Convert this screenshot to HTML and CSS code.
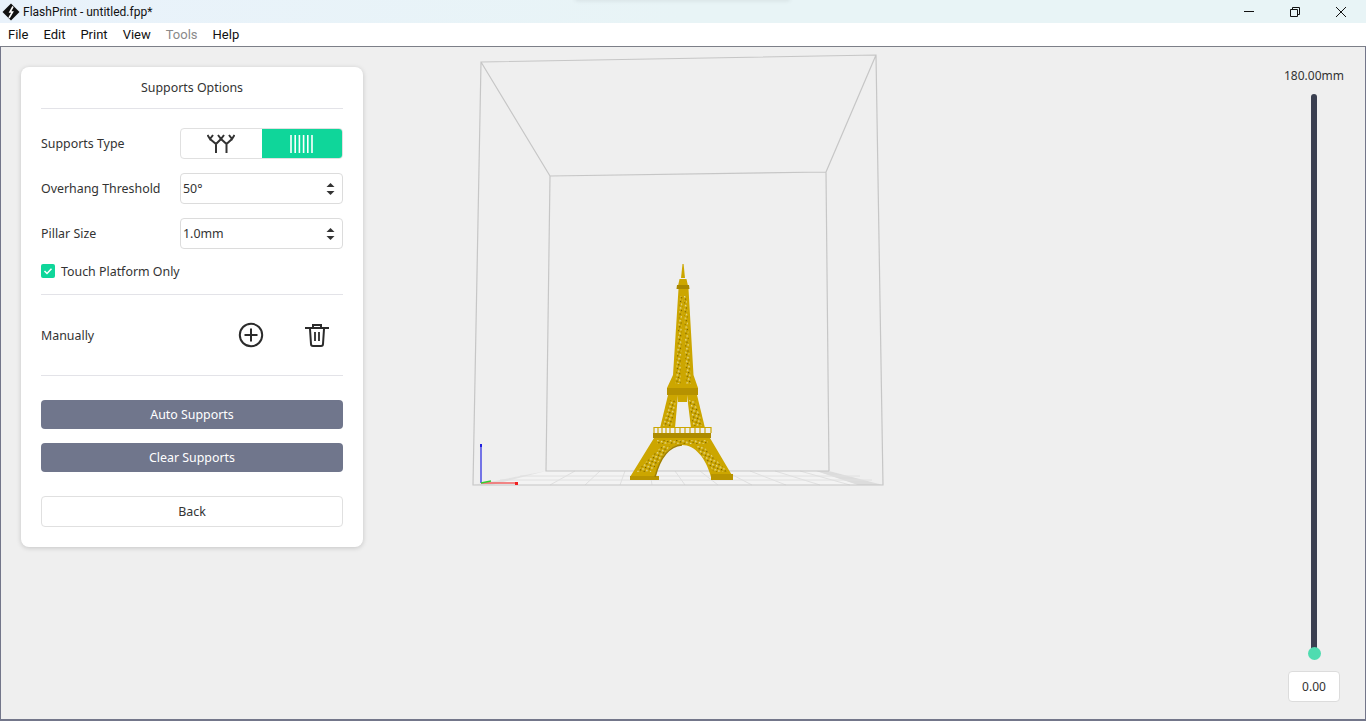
FILE: index.html
```html
<!DOCTYPE html>
<html lang="en">
<head>
  <meta charset="UTF-8" />
  <title>FlashPrint - untitled.fpp*</title>
  <link rel="stylesheet" href="styles.css">
</head>
<body>
  <div class="titlebar">
    <div class="title-shadow"></div>
    <svg class="logo" width="18" height="18" viewBox="0 0 18 18">
      <path d="M9 0.5 L17.5 9 L9 17.5 L0.5 9 Z" fill="#111"/>
      <path d="M11 3.5 L8 9 L10.5 9 L7 15" fill="none" stroke="#fff" stroke-width="1.6"/>
    </svg>
    <span class="title">FlashPrint - untitled.fpp*</span>
    <div class="winbtns">
      <svg width="12" height="12" viewBox="0 0 12 12"><path d="M1 5.5 H11" stroke="#111" fill="none"/></svg>
      <svg width="12" height="12" viewBox="0 0 12 12"><path d="M1.5 3.5 H8.5 V10.5 H1.5 Z M3.5 3.5 V1.5 H10.5 V8.5 H8.5" stroke="#111" fill="none"/></svg>
      <svg width="12" height="12" viewBox="0 0 12 12"><path d="M1 1 L11 11 M11 1 L1 11" stroke="#111" fill="none"/></svg>
    </div>
  </div>

  <div class="menubar">
    <span>File</span>
    <span>Edit</span>
    <span>Print</span>
    <span>View</span>
    <span class="disabled">Tools</span>
    <span>Help</span>
  </div>

  <div class="workspace">
    <svg class="scene" viewBox="1 47 1364 672" width="1364" height="672">
      <defs>
        <pattern id="lattice" width="4" height="4" patternUnits="userSpaceOnUse" patternTransform="rotate(20)">
          <rect x="0" y="0" width="1.5" height="1.5" fill="#e6dc9c"/>
          <rect x="2" y="2" width="1.2" height="1.2" fill="#6f5a00"/>
        </pattern>
      </defs>
      <!-- floor grid -->
      <path d="M546 471 H829 L883 485 H473 Z" fill="#f3f3f3"/>
      <path d="M829 471 L883 485 H858 L816 471 Z" fill="#dcdcdc"/>
      <path d="M546 471 L473 485 H492 Z" fill="#e2e2e2"/>
      <path d="M520 476 H860 M500 480 H872 M575 471 L550 485 M600 471 L585 485 M625 471 L620 485 M650 471 L652 485 M675 471 L685 485 M700 471 L718 485 M725 471 L752 485 M750 471 L786 485 M775 471 L820 485 M800 471 L850 485" stroke="#e0e0e0" stroke-width="1" fill="none"/>
      <!-- build volume -->
      <path d="M481 62 L876 55 L883 485 H473 Z M550 176 L826 172 L829 471 M550 176 L546 471 H829 M481 62 L550 176 M876 55 L826 172" fill="none" stroke="#c6c6c6" stroke-width="1.2"/>
      <!-- axes -->
      <path d="M481 445 V483" stroke="#2020e0" stroke-width="1.2"/>
      <path d="M481 483 H517" stroke="#f06060" stroke-width="1.6"/>
      <path d="M481 483 L491 481" stroke="#30d030" stroke-width="1.4"/>
      <rect x="480" y="444" width="2" height="3" fill="#2020e0"/>
      <rect x="515" y="482" width="3" height="3" fill="#f02020"/>

      <!-- tower -->
      <g fill="#cca600">
        <path d="M682.5 264 H683.6 L685 278 H681 Z"/>
        <path d="M679.5 279 H686.5 L688 286 H678 Z"/>
        <path d="M677 285 H689 L689.5 289 H676.5 Z" fill="#a98800"/>
        <path d="M678.5 289 H688.5 L693.5 375 L698 388 H667 L673 375 Z"/>
        <path d="M667 388 H698 V395 H667 Z" fill="#b69200"/>
        <path d="M668 395 H678 L675 428 H660 Z"/>
        <path d="M687 395 H697 L705 428 H691 Z"/>
        <path d="M678 395 H687 V402 H678 Z"/>
        <path d="M653 433 H711 V438 H653 Z" fill="#ad8b00"/>
        <path d="M654 438 H710 L733 477 H711 C706 458 695 445 682 445 C668 445 660 458 655 477 H630 Z"/>
        <rect x="630" y="476" width="29" height="4" fill="#b89400"/>
        <rect x="711" y="474" width="22" height="6" fill="#b89400"/>
      </g>
      <!-- railing -->
      <path d="M654 427.5 H711 M654 427 V433 M658 428 V433 M662 428 V433 M666 428 V433 M670 428 V433 M675 428 V433 M680 428 V433 M685 428 V433 M690 428 V433 M695 428 V433 M700 428 V433 M705 428 V433 M711 427 V433" stroke="#cca600" stroke-width="1.2" fill="none"/>
      <!-- lattice -->
      <g fill="url(#lattice)">
        <path d="M680 296 H682.5 L680.5 384 H675.5 Z"/>
        <path d="M684 296 H686.5 L691 384 H686 Z"/>
        <path d="M670 400 H676 L672 426 H663 Z"/>
        <path d="M689 400 H695 L703 426 H693 Z"/>
        <path d="M657 440 H708 V444 H657 Z"/>
        <path d="M662 446 H670 L651 472 H636 Z"/>
        <path d="M695 446 H703 L728 472 H714 Z"/>
      </g>
      <path d="M655 477 C660 458 668 446 682 445" fill="none" stroke="#a08000" stroke-width="1.5"/>
    </svg>

    <div class="panel">
      <div class="panel-title">Supports Options</div>

      <div class="section options">
        <div class="row">
          <label>Supports Type</label>
          <div class="segment">
            <div class="seg">
              <svg width="28" height="20" viewBox="0 0 28 20">
                <path d="M9 19 V10 L3 5 M9 10 L14 5 M19.5 19 V10 L14 5 M19.5 10 L25 5 M0.5 1 L3 5 L6 1 M11 1 L14 5 L17 1 M22 1 L25 5 L27.5 1" fill="none" stroke="#333" stroke-width="2"/>
              </svg>
            </div>
            <div class="seg seg-on">
              <svg width="23" height="18" viewBox="0 0 23 18">
                <path d="M1 0 V18 M5.2 0 V18 M9.4 0 V18 M13.6 0 V18 M17.8 0 V18 M22 0 V18" stroke="#fff" stroke-width="1.6"/>
              </svg>
            </div>
          </div>
        </div>
        <div class="row">
          <label>Overhang Threshold</label>
          <div class="spin">
            <span>50°</span>
            <svg width="9" height="14" viewBox="0 0 9 14"><path d="M4.5 1 L8.5 5 H0.5 Z M4.5 13 L0.5 9 H8.5 Z" fill="#333"/></svg>
          </div>
        </div>
        <div class="row">
          <label>Pillar Size</label>
          <div class="spin">
            <span>1.0mm</span>
            <svg width="9" height="14" viewBox="0 0 9 14"><path d="M4.5 1 L8.5 5 H0.5 Z M4.5 13 L0.5 9 H8.5 Z" fill="#333"/></svg>
          </div>
        </div>
        <div class="check">
          <span class="checkbox">
            <svg width="14" height="14" viewBox="0 0 14 14"><path d="M3.5 7 L6 9.5 L10.5 4.8" fill="none" stroke="#fff" stroke-width="1.5"/></svg>
          </span>
          <span class="check-label">Touch Platform Only</span>
        </div>
      </div>

      <div class="section manual">
        <span>Manually</span>
        <div class="manual-icons">
          <svg width="26" height="26" viewBox="0 0 26 26">
            <circle cx="13" cy="13" r="11.2" fill="none" stroke="#2b2b2b" stroke-width="2"/>
            <path d="M6.5 13 H19.5 M13 6.5 V19.5" stroke="#2b2b2b" stroke-width="2"/>
          </svg>
          <svg width="24" height="24" viewBox="0 0 24 24">
            <path d="M0 5 H24" fill="none" stroke="#2b2b2b" stroke-width="2"/>
            <path d="M8 4 V2 H16 V4" fill="none" stroke="#2b2b2b" stroke-width="2"/>
            <path d="M5 6 L6 21 Q6 23 8 23 H16 Q18 23 18 21 L19 6" fill="none" stroke="#2b2b2b" stroke-width="2"/>
            <path d="M10 9 V18 M14 9 V18" stroke="#2b2b2b" stroke-width="1.8"/>
          </svg>
        </div>
      </div>

      <div class="actions">
        <button class="btn-dark">Auto Supports</button>
        <button class="btn-dark">Clear Supports</button>
        <button class="btn-back">Back</button>
      </div>
    </div>

    <div class="slider">
      <div class="slider-label">180.00mm</div>
      <div class="slider-track"></div>
      <div class="slider-knob"></div>
      <div class="slider-value">0.00</div>
    </div>
  </div>
</body>
</html>
```

FILE: styles.css
```css
* {
  box-sizing: border-box;
}

html, body {
  margin: 0;
  padding: 0;
  height: 721px;
  overflow: hidden;
}

body {
  display: flex;
  flex-direction: column;
  font-family: 'Noto Sans', sans-serif;
  font-size: 12.4px;
  color: #333;
  background: #fff;
}

.titlebar {
  position: relative;
  height: 23px;
  display: flex;
  align-items: center;
  padding-left: 2px;
  background: linear-gradient(to right, #e9f2fb, #e8f4f6 50%);
  color: #111;
}

/* soft shadow of a window sitting above the screen edge */
.title-shadow {
  position: absolute;
  left: 575px;
  top: -6px;
  width: 215px;
  height: 6px;
  box-shadow: 0 1px 4px rgba(0, 0, 0, 0.08);
}

.logo {
  flex: none;
}

.title {
  margin-left: 3px;
  font-family: Roboto, sans-serif;
  font-size: 12px;
}

.winbtns {
  margin-left: auto;
  display: flex;
  gap: 34px;
  padding-right: 19px;
}

.menubar {
  height: 23px;
  display: flex;
  align-items: center;
  padding-left: 8px;
  gap: 15px;
  background: #fff;
  color: #111;
  font-family: Roboto, sans-serif;
  font-size: 13px;
}

.menubar .disabled {
  color: #8a8a8a;
}

.workspace {
  position: relative;
  flex: 1;
  background: #efefef;
  border: 1px solid #73768a;
  border-top-color: #7c7f88;
  border-bottom-width: 2px;
}

.scene {
  position: absolute;
  left: 0;
  top: 0;
}

.panel {
  position: absolute;
  left: 20px;
  top: 20px;
  width: 342px;
  height: 480px;
  padding: 0 20px;
  background: #fff;
  border-radius: 8px;
  box-shadow: 0 1px 5px rgba(0, 0, 0, 0.18);
}

.panel-title {
  height: 42px;
  line-height: 41px;
  text-align: center;
  border-bottom: 1px solid #e3e3e8;
}

.section {
  border-bottom: 1px solid #e3e3e8;
}

.options {
  padding-top: 19px;
  height: 186px;
}

.row {
  display: grid;
  grid-template-columns: 139px 1fr;
  align-items: center;
  height: 31px;
  margin-bottom: 14px;
}

.row label {
  padding-bottom: 1px;
}

.segment {
  display: flex;
  height: 31px;
  border: 1px solid #e0e0e0;
  border-radius: 4px;
  overflow: hidden;
}

.seg {
  flex: 1;
  display: flex;
  align-items: center;
  justify-content: center;
}

.seg-on {
  background: #0fd69a;
}

.spin {
  display: flex;
  align-items: center;
  justify-content: space-between;
  height: 31px;
  padding: 0 7px 0 2px;
  border: 1px solid #dcdcdc;
  border-radius: 4px;
}

.check {
  display: flex;
  align-items: center;
  gap: 6px;
  height: 15px;
}

.check-label {
  padding-top: 1px;
}

.checkbox {
  width: 14px;
  height: 14px;
  border-radius: 2px;
  background: #0fd69a;
  display: flex;
}

.manual {
  display: flex;
  align-items: center;
  height: 81px;
}

.manual-icons {
  margin-left: auto;
  display: flex;
  align-items: center;
  gap: 41px;
  padding-right: 14px;
}

.actions {
  display: flex;
  flex-direction: column;
  padding-top: 24px;
}

.actions button {
  font: inherit;
  width: 100%;
  padding: 0 0 1px;
  border-radius: 4px;
}

.btn-dark {
  height: 29px;
  margin-bottom: 14px;
  border: none;
  background: #70768c;
  color: #fff;
}

.btn-back {
  height: 31px;
  margin-top: 10px;
  border: 1px solid #e0e0e0;
  background: #fff;
  color: #333;
}

.slider {
  position: absolute;
  right: 21px;
  top: 21px;
  bottom: 17px;
  width: 60px;
  display: flex;
  flex-direction: column;
  align-items: center;
}

.slider-label {
  height: 26px;
  line-height: 16px;
  font-size: 12px;
  white-space: nowrap;
}

.slider-track {
  flex: 1;
  width: 6px;
  background: #3a3f50;
  border-radius: 3px 3px 0 0;
}

.slider-knob {
  width: 13px;
  height: 13px;
  margin-top: -5px;
  border-radius: 50%;
  background: #4fdcb0;
}

.slider-value {
  width: 52px;
  height: 31px;
  margin-top: 11px;
  line-height: 29px;
  font-size: 12px;
  text-align: center;
  background: #fff;
  border: 1px solid #dcdcdc;
  border-radius: 4px;
}
```
